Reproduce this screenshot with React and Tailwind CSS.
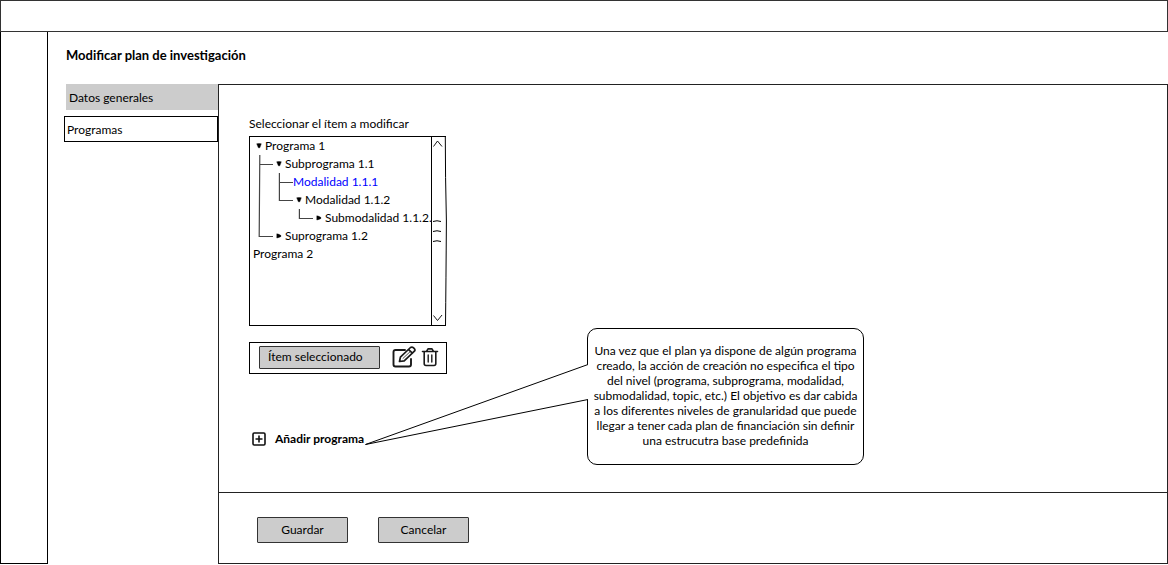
const treeRows = [
  { label: 'Programa 1', indent: 'pl-[15px]', arrow: 'open' },
  { label: 'Subprograma 1.1', indent: 'pl-[35px]', arrow: 'open' },
  { label: 'Modalidad 1.1.1', indent: 'pl-[43px]', selected: true },
  { label: 'Modalidad 1.1.2', indent: 'pl-[55px]', arrow: 'open' },
  { label: 'Submodalidad 1.1.2.', indent: 'pl-[75px]', arrow: 'closed' },
  { label: 'Suprograma 1.2', indent: 'pl-[35px]', arrow: 'closed' },
  { label: 'Programa 2', indent: 'pl-[3px]' },
];

function Tree() {
  return (
    <div className="flex h-[190px] w-[197px] border border-r-0 border-black">
      <div className="relative min-w-0 flex-1">
        <svg className="pointer-events-none absolute top-0 left-0" width="80" height="126" fill="none" stroke="#444" aria-hidden="true">
          <path d="M9.8 18 L9.2 99.5 H23 M9.5 27.5 H23" strokeWidth="1.2" />
          <path d="M29.4 36 V63.5 H43 M29.4 45.5 H43" strokeWidth="1.2" />
          <path d="M49.4 72 V81.5 H63" strokeWidth="1.2" />
        </svg>
        <ul role="tree" aria-labelledby="tree-label">
          {treeRows.map((row) => (
            <li key={row.label} role="treeitem" aria-selected={!!row.selected} className={`relative flex h-[18px] items-center whitespace-nowrap ${row.indent} ${row.selected ? 'text-[#0000ff]' : ''}`}>
              {row.arrow && (
                <svg className="-ml-[9px] mr-[3px] shrink-0" width="6" height="8" viewBox="0 0 6 8" aria-hidden="true">
                  <path d={row.arrow === 'open' ? 'M.7 1.8 Q3 1.2 5.3 1.8 L3.8 5.8 H2.4 Z' : 'M.8 1.8 Q3 2 5 3.6 V4.4 Q3 5.6 .8 6 Z'} fill="#000" stroke="#000" strokeWidth=".4" />
                </svg>
              )}
              {row.label}
            </li>
          ))}
        </ul>
      </div>
      <svg className="-my-px h-[190px] w-4 shrink-0 overflow-visible" viewBox="0 0 16 190" fill="none" stroke="#000" aria-hidden="true">
        <path d="M1.5 0 V190" />
        <path d="M1 .5 H15.3 Q15.3 40 16.4 85 Q16 145 15.5 189.5 H1" />
        <path d="M3.5 10.5 L7.5 5 L12 10.5 M3.5 179.5 L7.5 184.5 L12 179" strokeWidth=".9" />
        <path d="M3 85.5 Q7 84 11 85.5 M3 95.5 Q7 94 11 95.5 M3 105.5 Q7 104 11 105.5" />
      </svg>
    </div>
  );
}

function EditIcon() {
  return (
    <svg width="24" height="23" viewBox="0 0 24 23" fill="none" stroke="#1a1a1a" strokeWidth="1.9" strokeLinecap="round" strokeLinejoin="round" aria-hidden="true">
      <path d="M13 4 H3.5 Q1.5 4 1.5 6 V18.5 Q1.5 20.5 3.5 20.5 H17 Q19 20.5 19 18.5 V13" />
      <path d="M7.5 15.5 L8.4 11.2 L18.5 1.5 Q20 .5 21.3 1.6 L22.3 2.6 Q23.5 3.8 22.4 5.2 L12.2 14.8 Z M16.6 3.6 L20.4 7.2" strokeWidth="1.7" />
      <path d="M11 12.4 L18 5.8" strokeWidth=".8" />
    </svg>
  );
}

function TrashIcon() {
  return (
    <svg width="18" height="19" viewBox="0 0 18 19" fill="none" stroke="#1a1a1a" strokeWidth="1.6" strokeLinecap="round" strokeLinejoin="round" aria-hidden="true">
      <path d="M1.5 3.5 H16.5 M5.5 3.3 L7 .9 H11 L12.5 3.3 M3.2 3.5 V15.5 Q3.2 17.5 5 17.5 H13 Q14.8 17.5 14.8 15.5 V3.5" />
      <path d="M7.2 7 V14 M10.8 7 V14" strokeWidth="1.4" />
    </svg>
  );
}

function Callout() {
  return (
    <aside className="absolute top-[243px] left-[368px] flex h-[137px] w-[277px] items-center justify-center rounded-[10px] border border-black bg-white px-1 pb-0.5 text-center leading-[15px]">
      <svg className="pointer-events-none absolute top-[35px] -left-[223px]" width="224" height="82" fill="none" stroke="#000" aria-hidden="true">
        <path d="M222.5 .5 V36" stroke="#fff" strokeWidth="3" />
        <path d="M223 .5 L.5 80.5 L223 35.5" />
      </svg>
      <p>
        Una vez que el plan ya dispone de algún programa creado, la acción de creación no especifica el tipo del nivel (programa, subprograma, modalidad, submodalidad, topic, etc.) El objetivo es dar cabida a los diferentes niveles de granularidad que puede llegar a tener cada plan de financiación sin definir una estrucutra base predefinida
      </p>
    </aside>
  );
}

export default function App() {
  return (
    <div className="flex min-h-screen flex-col bg-white font-['Lato',sans-serif] text-[12px] leading-[18px] text-black">
      <header className="h-8 border border-[#333]" />
      <div className="flex flex-1 pb-px">
        <aside className="w-12 shrink-0 border border-t-0 border-black" />
        <main className="flex min-w-0 flex-1 flex-col">
          <h1 className="mt-[14px] ml-[18px] text-[13px] font-bold">Modificar plan de investigación</h1>
          <div className="mt-5 flex flex-1">
            <nav className="flex w-[170px] shrink-0 flex-col gap-1.5 pl-4">
              <a href="#datos" className="relative -mr-px ml-0.5 flex h-[26px] items-center bg-[#ccc] pt-0.5 pl-[3px]">Datos generales</a>
              <a href="#programas" className="flex h-[26px] items-center border border-black pt-0.5 pl-0.5">Programas</a>
            </nav>
            <section className="relative flex min-w-0 flex-1 flex-col border border-[#222]">
              <div className="flex-1 px-[30px] pt-[30px]">
                <p id="tree-label" className="mb-[3px]">Seleccionar el ítem a modificar</p>
                <Tree />
                <div className="mt-4 flex h-8 w-[198px] items-center border border-black pb-0.5 pl-[9px]">
                  <button type="button" className="mr-3 h-[23px] w-[121px] rounded-[1px] border border-[#333] bg-[#ccc] pl-2 text-left">Ítem seleccionado</button>
                  <button type="button" aria-label="Editar" className="mr-[5px]"><EditIcon /></button>
                  <button type="button" aria-label="Eliminar"><TrashIcon /></button>
                </div>
                <button type="button" className="mt-[56px] ml-[3px] flex items-center gap-[9px] font-bold">
                  <svg width="14" height="14" viewBox="0 0 14 14" fill="none" stroke="#111" strokeWidth="1.6" aria-hidden="true">
                    <rect x="1" y="1" width="12" height="12" rx="1.2" />
                    <path d="M3.5 7 H10.5 M7 3.5 V10.5" />
                  </svg>
                  Añadir programa
                </button>
              </div>
              <footer className="flex h-[71px] items-center gap-[30px] border-t border-[#222] px-[38px] pt-[3px]">
                <button type="button" className="h-[26px] w-[91px] rounded-[1px] border border-[#333] bg-[#ccc]">Guardar</button>
                <button type="button" className="h-[26px] w-[91px] rounded-[1px] border border-[#333] bg-[#ccc]">Cancelar</button>
              </footer>
              <Callout />
            </section>
          </div>
        </main>
      </div>
    </div>
  );
}
